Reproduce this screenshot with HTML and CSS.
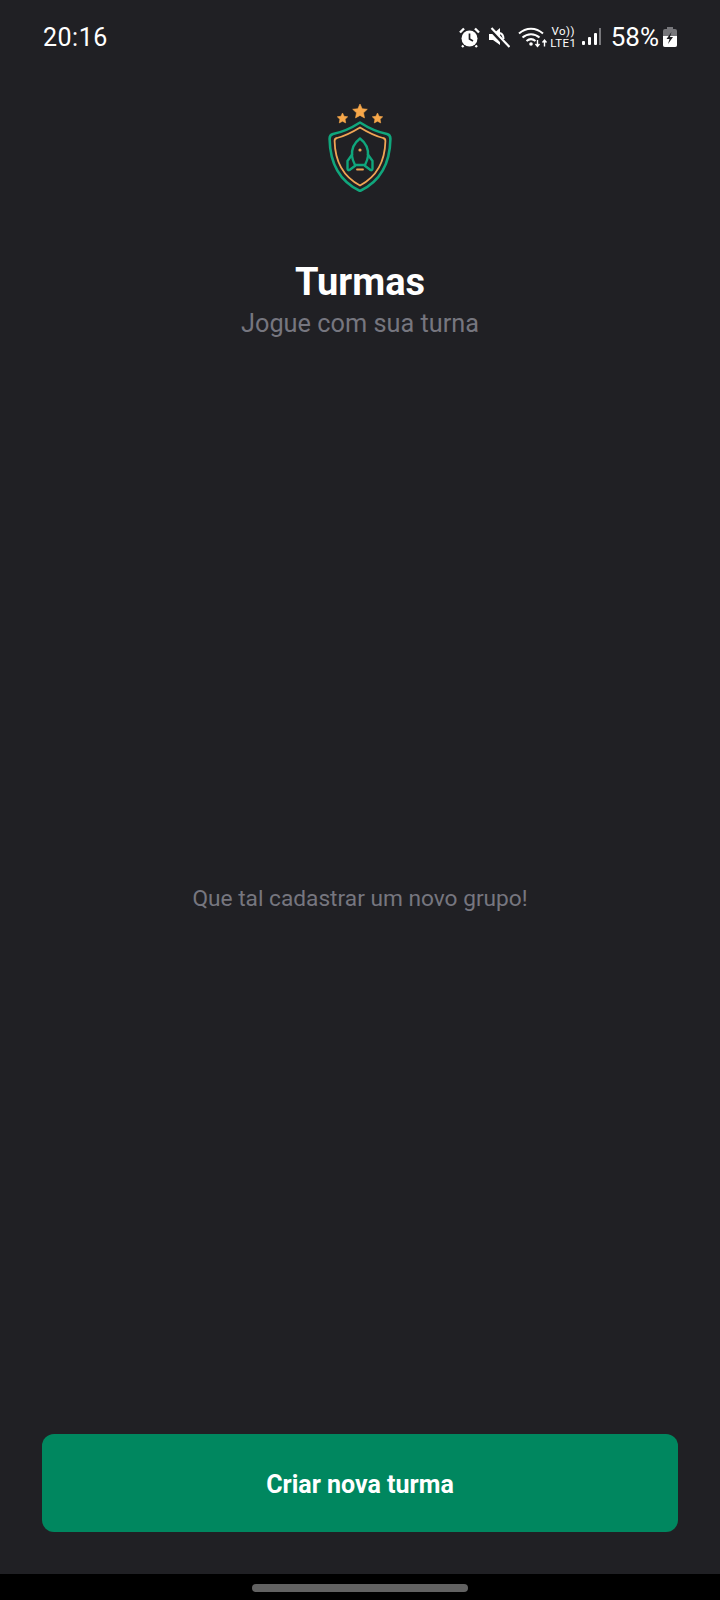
FILE: index.html
```html
<!DOCTYPE html>
<html>
  <head>
    <meta charset="UTF-8" />
    <title>Turmas</title>
    <link rel="stylesheet" href="styles.css">
  </head>
  <body>
    <div class="status-bar">
      <span class="clock">20:16</span>
      <div class="status-icons">
        <!-- alarm -->
        <svg class="ic-alarm" width="21" height="21" viewBox="0 0 21 21">
          <circle cx="10.5" cy="11.5" r="8" fill="#fff"/>
          <path d="M1 5.5 5 1.5M20 5.5 16 1.5M4.5 18.5 3 20M16.5 18.5 18 20" stroke="#fff" stroke-width="2.4" fill="none"/>
          <path d="M10.5 6.5v5.5l3.5 2" stroke="#202024" stroke-width="1.7" fill="none"/>
        </svg>
        <!-- muted speaker -->
        <svg class="ic-mute" width="22" height="21" viewBox="0 0 22 21">
          <path d="M1 7h4l7-6v17L5 13H1z" fill="#fff"/>
          <path d="M12 6c2.500 1 3.500 3 3.500 6" stroke="#fff" stroke-width="2" fill="none"/>
          <path d="M2 2l18 19" stroke="#202024" stroke-width="3.500"/>
          <path d="M3.500 1l18 19" stroke="#fff" stroke-width="2.200"/>
        </svg>
        <!-- wifi with arrows -->
        <svg class="ic-wifi" width="30" height="22" viewBox="0 0 30 22">
          <path d="M1 7.5C8 1 18 1 25 7.5M4.5 11.5C9.5 7 16.500 7 21.500 11.500M8.500 15C11.500 12.500 14.500 12.500 17.500 15" stroke="#fff" stroke-width="2" fill="none"/>
          <circle cx="13" cy="18" r="1.800" fill="#fff"/>
          <path d="M19.500 14v6M17.500 18l2 2.500 2-2.500M26.500 20.500v-6M24.500 16.500l2-2.500 2 2.500" stroke="#fff" stroke-width="1.400" fill="none"/>
        </svg>
        <div class="volte"><span>Vo))</span><span>LTE1</span></div>
        <!-- signal -->
        <svg class="ic-signal" width="19" height="20" viewBox="0 0 19 20">
          <rect x="0" y="14" width="3" height="4" rx="1" fill="#fff"/>
          <rect x="6" y="10" width="3" height="8" rx="1" fill="#fff"/>
          <rect x="12" y="6" width="3" height="12" rx="1" fill="#fff"/>
          <rect x="17" y="1" width="2" height="17" fill="#77777b"/>
        </svg>
        <span class="battery-pct">58%</span>
        <!-- battery charging -->
        <svg class="ic-battery" width="16" height="22" viewBox="0 0 16 22">
          <path d="M5 1h6v2H5z" fill="#77777b"/>
          <rect x="1" y="3" width="14" height="18" rx="2" fill="#77777b"/>
          <path d="M1 10h14v9a2 2 0 0 1-2 2H3a2 2 0 0 1-2-2z" fill="#fff"/>
          <path d="M9.500 6 4.500 13h3l-1.500 5 5-7H8z" fill="#202024"/>
        </svg>
      </div>
    </div>

    <div class="header">
      <svg class="logo" width="70" height="88" viewBox="0 0 70 88">
        <g fill="#f7a74a" stroke="#f7a74a" stroke-width="0.6" stroke-linejoin="round">
          <path d="M35 0l2.200 4.700 5.100.6-3.800 3.500 1 5.100-4.500-2.500-4.500 2.500 1-5.100-3.800-3.500 5.100-.6z"/>
          <path d="M17.500 9l1.600 3.300 3.600.5-2.600 2.500.6 3.600-3.200-1.700-3.200 1.700.6-3.600-2.600-2.500 3.600-.5z"/>
          <path d="M52.500 9l1.600 3.300 3.600.5-2.600 2.500.6 3.600-3.200-1.700-3.200 1.700.6-3.600-2.600-2.500 3.600-.5z"/>
        </g>
        <path d="M35 18.500Q21 27.500 8 30Q4.500 31 4.600 35C5 58 14 77 35 87C56 77 65 58 65.400 35Q65.500 31 62 30Q49 27.500 35 18.500z" fill="none" stroke="#10a67c" stroke-width="2.600" stroke-linejoin="round"/>
        <path d="M35 23.500Q22 31.500 12 34Q9.500 34.500 9.600 37C10 56 18 72.500 35 81.500C52 72.500 60 56 60.400 37Q60.500 34.500 58 34Q48 31.500 35 23.500z" fill="none" stroke="#f0a555" stroke-width="1.800" stroke-linejoin="round"/>
        <path d="M35 34.500C29 39 26.500 46 27 52C27.300 55 28.500 58 30 61H40C41.500 58 42.700 55 43 52C43.500 46 41 39 35 34.500z" fill="none" stroke="#10a67c" stroke-width="2.400" stroke-linejoin="round"/>
        <path d="M27.500 50 22.500 57V64.500C22.500 66 23.500 66.500 24.500 66L30.500 61.500M42.500 50 47.500 57V64.500C47.500 66 46.500 66.500 45.500 66L39.500 61.500" fill="none" stroke="#10a67c" stroke-width="2.400" stroke-linejoin="round"/>
        <circle cx="35" cy="46" r="1.600" fill="#f0a555"/>
        <path d="M32 65.500h6" stroke="#f0a555" stroke-width="1.800" stroke-linecap="round"/>
      </svg>
      <h1 class="title">Turmas</h1>
      <p class="subtitle">Jogue com sua turna</p>
    </div>

    <div class="empty">
      <p>Que tal cadastrar um novo grupo!</p>
    </div>

    <div class="actions">
      <button class="btn-primary">Criar nova turma</button>
    </div>

    <div class="nav-bar">
      <div class="home-pill"></div>
    </div>
  </body>
</html>
```

FILE: styles.css
```css
html, body {
  height: 100%;
}
body {
  margin: 0;
  background-color: #202024;
  font-family: Roboto, sans-serif;
  color: white;
  display: flex;
  flex-direction: column;
}

.status-bar {
  height: 72px;
  box-sizing: border-box;
  padding: 2px 42px 0 43px;
  display: flex;
  justify-content: space-between;
  align-items: center;
  flex-shrink: 0;
}
.clock {
  font-size: 25px;
  letter-spacing: 0.5px;
}
.status-icons {
  display: flex;
  align-items: center;
}
.ic-alarm {
  margin-right: 8px;
}
.ic-mute {
  margin-right: 8px;
}
.ic-wifi {
  margin-right: 2px;
}
.volte {
  display: flex;
  flex-direction: column;
  align-items: center;
  font-size: 11.5px;
  line-height: 12px;
  letter-spacing: 0.4px;
  width: 27px;
  margin-right: 5px;
}
.ic-signal {
  margin-right: 10px;
}
.battery-pct {
  font-size: 26px;
  margin-right: 3px;
}

.header {
  display: flex;
  flex-direction: column;
  align-items: center;
  padding-top: 32px;
  flex-shrink: 0;
}
.logo {
  display: block;
}
.title {
  margin: 68px 0 0;
  font-size: 38px;
  line-height: 44px;
  font-weight: 700;
}
.subtitle {
  margin: 4px 0 0;
  font-size: 25.3px;
  line-height: 32px;
  color: #76767f;
}

.empty {
  flex: 1;
  display: flex;
  align-items: center;
  justify-content: center;
  padding-top: 22px;
}
.empty p {
  margin: 0;
  font-size: 22.7px;
  color: #76767f;
}

.actions {
  padding: 0 42px 42px;
  flex-shrink: 0;
}
.btn-primary {
  display: block;
  width: 100%;
  height: 98px;
  border: 0;
  border-radius: 12px;
  background-color: #00875f;
  color: white;
  font-family: Roboto, sans-serif;
  font-size: 25px;
  font-weight: 700;
  padding-top: 4px;
}

.nav-bar {
  height: 26px;
  background-color: black;
  display: flex;
  justify-content: center;
  padding-top: 10px;
  box-sizing: border-box;
  flex-shrink: 0;
}
.home-pill {
  width: 216px;
  height: 8px;
  border-radius: 4px;
  background-color: #626262;
}
```
